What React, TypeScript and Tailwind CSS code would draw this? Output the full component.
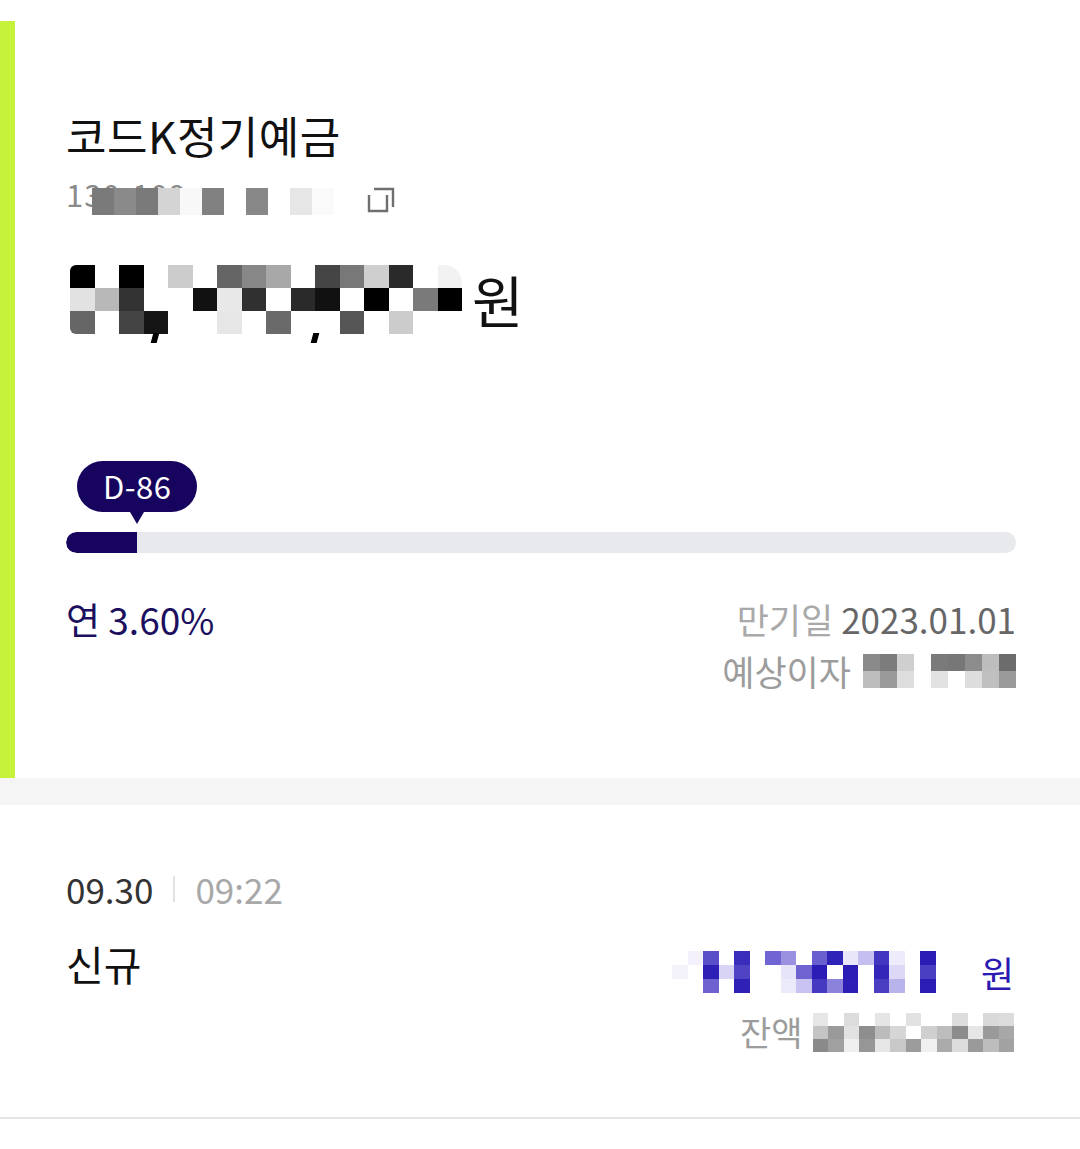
import React from "react";

const FONT = { fontFamily: '"Noto Sans CJK KR", "Noto Sans", sans-serif' };

// censored value blocks, row by row
type MosaicProps = { rows: string[][]; cellW: number; cellH: number; className?: string };

function Mosaic({ rows, cellW, cellH, className }: MosaicProps) {
  return (
    <div className={"flex flex-col " + (className || "")}>
      {rows.map((row, i) => (
        <div key={i} className="flex">
          {row.map((c, j) => (
            <div key={j} className={c} style={{ width: cellW, height: cellH }} />
          ))}
        </div>
      ))}
    </div>
  );
}

const accountRows = [
  [
    "bg-[#7a7a7a]",
    "bg-[#8a8a8a]",
    "bg-[#7a7a7a]",
    "bg-[#d4d4d4]",
    "bg-[#f8f8f8]",
    "bg-[#818181]",
    "bg-white",
    "bg-[#888888]",
    "bg-white",
    "bg-[#e6e6e6]",
    "bg-[#fafafa]",
  ],
];

const amountRows = [
  ["bg-black", "bg-white", "bg-black", "bg-white", "bg-[#cccccc]", "bg-white", "bg-[#656565]", "bg-[#878787]", "bg-[#a8a8a8]", "bg-white", "bg-[#454545]", "bg-[#787878]", "bg-[#cfcfcf]", "bg-[#2a2a2a]", "bg-white", "bg-[#f2f2f2]"],
  ["bg-[#e2e2e2]", "bg-[#b8b8b8]", "bg-[#333333]", "bg-white", "bg-white", "bg-[#111111]", "bg-[#e8e8e8]", "bg-[#303030]", "bg-white", "bg-[#2a2a2a]", "bg-[#111111]", "bg-white", "bg-black", "bg-white", "bg-[#7a7a7a]", "bg-black"],
  ["bg-[#666666]", "bg-white", "bg-[#444444]", "bg-[#151515]", "bg-white", "bg-white", "bg-[#e6e6e6]", "bg-white", "bg-[#6a6a6a]", "bg-white", "bg-white", "bg-[#555555]", "bg-white", "bg-[#cccccc]", "bg-white", "bg-white"],
];

const interestRows = [
  ["bg-[#8a8a8a]", "bg-[#7c7c7c]", "bg-[#cfcfcf]", "bg-white", "bg-[#7a7a7a]", "bg-[#777777]", "bg-[#8c8c8c]", "bg-[#bdbdbd]", "bg-[#6c6c6c]"],
  ["bg-[#bdbdbd]", "bg-[#9a9a9a]", "bg-[#dedede]", "bg-white", "bg-[#e2e2e2]", "bg-white", "bg-[#dddddd]", "bg-[#c0c0c0]", "bg-[#9a9a9a]"],
];

const blueRows = [
  ["bg-white", "bg-[#f2f1fc]", "bg-[#5a4fc8]", "bg-white", "bg-[#3a2dbb]", "bg-white", "bg-[#7065d2]", "bg-[#9a92e0]", "bg-white", "bg-[#6a5fcf]", "bg-[#3024b8]", "bg-[#e8e6f8]", "bg-[#c4bff0]", "bg-[#4236c0]", "bg-[#eeecfa]", "bg-white", "bg-[#2a1cb5]", "bg-white", "bg-white"],
  ["bg-[#f4f3fc]", "bg-white", "bg-[#2e20b6]", "bg-[#d8d4f5]", "bg-[#5044c4]", "bg-white", "bg-white", "bg-[#e6e4f8]", "bg-[#6e63d1]", "bg-[#2a1cb5]", "bg-white", "bg-[#2a1cb5]", "bg-white", "bg-[#3426b9]", "bg-[#dcd8f6]", "bg-white", "bg-[#4a3ec3]", "bg-white", "bg-white"],
  ["bg-white", "bg-white", "bg-[#6d62d0]", "bg-white", "bg-[#2f21b6]", "bg-white", "bg-white", "bg-[#ecebfa]", "bg-[#c8c3f1]", "bg-[#4538c1]", "bg-[#8b82dc]", "bg-[#2d1fb6]", "bg-white", "bg-[#4a3dc2]", "bg-[#b9b3ec]", "bg-white", "bg-[#2a1cb5]", "bg-white", "bg-white"],
];

const balanceRows = [
  ["bg-[#e6e6e6]", "bg-white", "bg-[#dcdcdc]", "bg-white", "bg-[#e5e5e5]", "bg-white", "bg-[#e2e2e2]", "bg-white", "bg-white", "bg-[#dddddd]", "bg-white", "bg-[#d9d9d9]", "bg-[#dcdcdc]"],
  ["bg-[#c4c4c4]", "bg-[#9a9a9a]", "bg-[#e2e2e2]", "bg-[#8e8e8e]", "bg-[#bcbcbc]", "bg-[#d6d6d6]", "bg-white", "bg-[#cfcfcf]", "bg-[#bdbdbd]", "bg-[#8c8c8c]", "bg-[#e6e6e6]", "bg-[#9a9a9a]", "bg-[#a8a8a8]"],
  ["bg-[#8a8a8a]", "bg-[#a0a0a0]", "bg-[#efefef]", "bg-[#969696]", "bg-[#e6e6e6]", "bg-[#c8c8c8]", "bg-[#9b9b9b]", "bg-[#f0f0f0]", "bg-[#aaaaaa]", "bg-[#dcdcdc]", "bg-[#9a9a9a]", "bg-[#bdbdbd]", "bg-[#a2a2a2]"],
];

function CopyIcon() {
  return (
    <svg width="30" height="28" viewBox="0 0 30 28" fill="none" stroke="#6f6f6f" strokeWidth="2.4">
      <path d="M8 4 H27 V22" />
      <path d="M3 10 V26 H21 V10" />
    </svg>
  );
}

export default function App() {
  const progress = 7.5; // percent of the term passed

  return (
    <div className="w-[1080px] h-[1149px] bg-white overflow-hidden" style={FONT}>
      <div className="h-[21px]" />

      {/* deposit card */}
      <div className="flex h-[757px]">
        <div className="w-[15px] bg-[#c6f23c]" />
        <div className="flex-1 pl-[51px] pr-[64px] pt-[86px]">
          <h1 className="text-[44px] leading-[56px] text-[#111] tracking-[0.5px]">코드K정기예금</h1>

          <div className="flex items-center mt-[14px] h-[34px]">
            <div className="relative w-[300px] h-[34px]">
              <span className="text-[31px] leading-[34px] text-[#8a8a8a] tracking-[1px]">130-109-</span>
              <Mosaic rows={accountRows} cellW={22} cellH={27} className="absolute left-[26px] top-[11px]" />
            </div>
            <div className="mt-[10px]">
              <CopyIcon />
            </div>
          </div>

          <div className="flex items-center mt-[48px] h-[80px]">
            <div className="relative">
              <Mosaic rows={amountRows} cellW={24.5} cellH={23} className="ml-[4px] rounded-l-[6px] rounded-r-[18px] overflow-hidden" />
              <div className="absolute left-[86px] top-[68px] h-[10px] w-[6px] bg-black skew-x-[-15deg]" />
              <div className="absolute left-[246px] top-[68px] h-[10px] w-[6px] bg-black skew-x-[-15deg]" />
            </div>
            <span className="ml-[10px] text-[56px] leading-[60px] text-[#111]">원</span>
          </div>

          {/* progress */}
          <div className="relative mt-[193px]">
            <div className="h-[21px] w-full rounded-full bg-[#e8e9ec] overflow-hidden">
              <div className="h-full bg-[#16045e] rounded-l-full" style={{ width: progress + "%" }} />
            </div>
            <div
              className="absolute bottom-[29px] -translate-x-1/2 flex flex-col items-center"
              style={{ left: progress + "%" }}
            >
              <div className="h-[51px] w-[120px] rounded-full bg-[#16045e] text-white text-[31px] flex items-center justify-center tracking-[0.5px]">
                D-86
              </div>
              <div className="w-0 h-0 border-l-[7px] border-r-[7px] border-t-[12px] border-l-transparent border-r-transparent border-t-[#16045e]" />
            </div>
          </div>

          <div className="flex justify-between mt-[44px]">
            <div className="text-[37px] leading-[44px] text-[#1b0f5e] tracking-[0px]">연 3.60%</div>
            <div className="flex flex-col items-end">
              <div className="text-[35px] leading-[44px] tracking-[0px]">
                <span className="text-[#a9a9a9]">만기일 </span>
                <span className="text-[#666]">2023.01.01</span>
              </div>
              <div className="flex items-center mt-[10px] h-[40px]">
                <span className="text-[35px] leading-[40px] text-[#9c9c9c] mr-[12px]">예상이자</span>
                <Mosaic rows={interestRows} cellW={17} cellH={17} />
              </div>
            </div>
          </div>
        </div>
      </div>

      <div className="h-[27px] bg-[#f5f5f5]" />

      {/* transaction row */}
      <div className="px-[66px] pt-[62px] border-b-2 border-[#e5e5e5] h-[314px]">
        <div className="flex items-center text-[35px] leading-[44px] tracking-[0px]">
          <span className="text-[#333]">09.30</span>
          <span className="mx-[20px] h-[26px] w-[2px] bg-[#e2e2e2]" />
          <span className="text-[#a8a8a8]">09:22</span>
        </div>
        <div className="flex justify-between mt-[24px]">
          <div className="text-[41px] leading-[56px] text-[#111]">신규</div>
          <div className="flex flex-col items-end mt-[13px]">
            <div className="flex items-center h-[48px]">
              <Mosaic rows={blueRows} cellW={15.5} cellH={14} />
              <span className="ml-[14px] text-[36px] leading-[48px] text-[#2a1ab2]">원</span>
            </div>
            <div className="flex items-center mt-[16px] h-[40px]">
              <span className="text-[34px] leading-[40px] text-[#9c9c9c] mr-[10px]">잔액</span>
              <Mosaic rows={balanceRows} cellW={15.5} cellH={13} />
            </div>
          </div>
        </div>
      </div>
    </div>
  );
}
